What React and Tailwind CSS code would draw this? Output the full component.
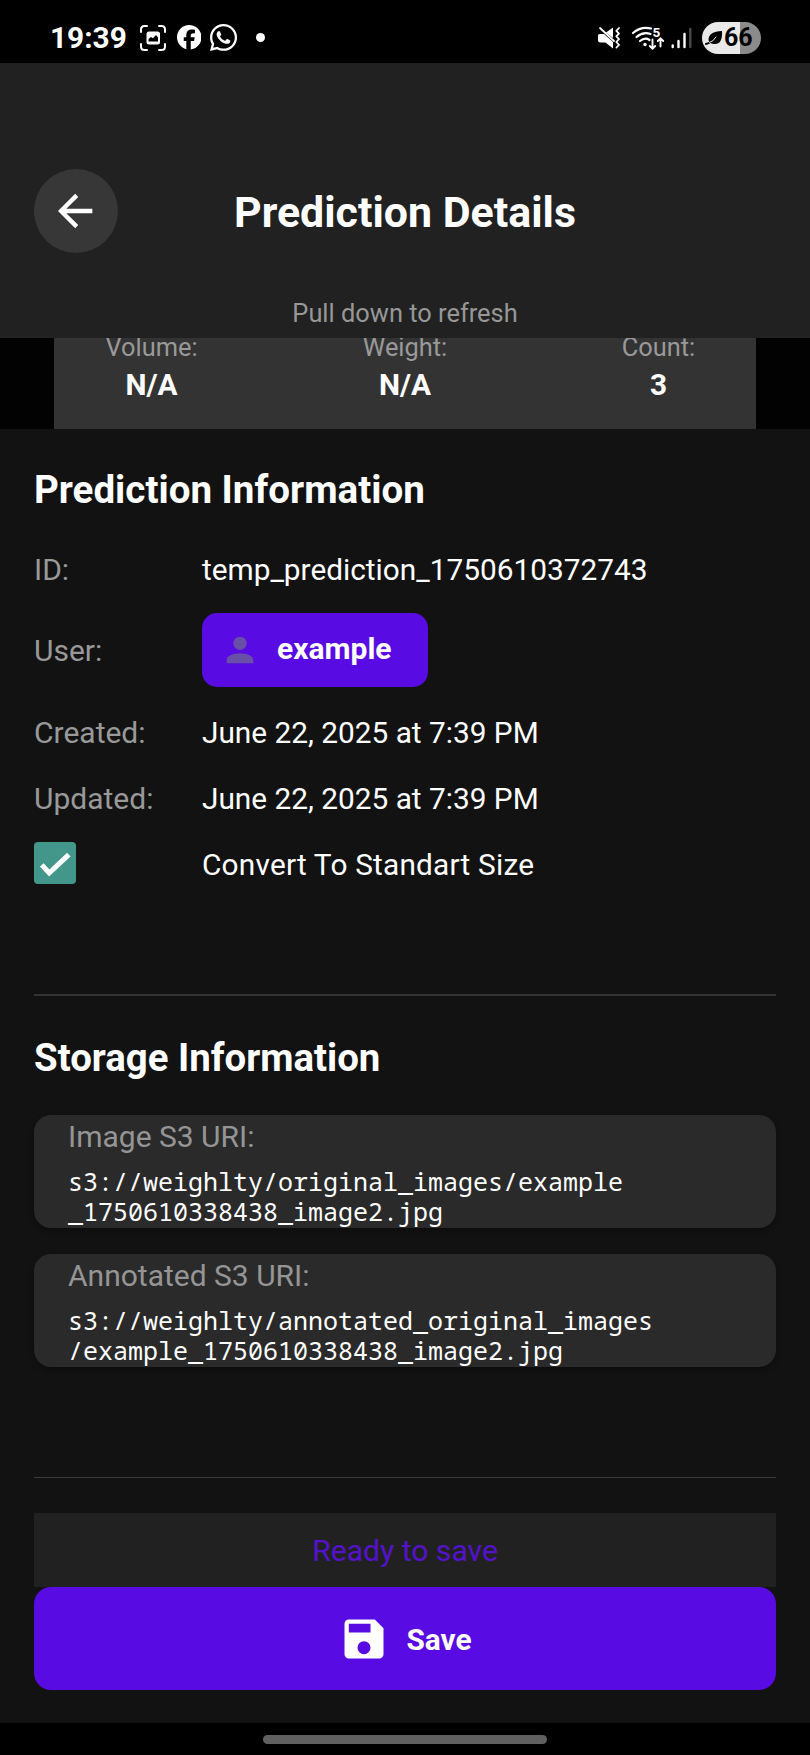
import { FaFacebook, FaWhatsapp } from "react-icons/fa6";

function CaptureIcon() {
  return (
    <svg className="h-[26px] w-[26px]" viewBox="0 0 26 26" fill="none">
      <path d="M1 7V4.5Q1 1 4.5 1H7M19 1h2.500Q25 1 25 4.500V7M25 19v2.500Q25 25 21.500 25H19M7 25H4.500Q1 25 1 21.500V19" stroke="#fff" strokeWidth="2" strokeLinecap="round" />
      <rect x="6.500" y="6.500" width="13.500" height="13" rx="2.500" fill="#fff" />
      <path d="M8.500 16.500v-2.500l2.500-2 2 1.300 3-3.300 2 2.500v4z" fill="#000" />
    </svg>
  );
}

function MuteIcon() {
  return (
    <svg className="h-[24px] w-[24px]" viewBox="0 0 24 24" fill="none">
      <path d="M1 9.500Q1 8 2.500 8H7L16 16V22.500L8.500 16.500H3.500Q1 16.500 1 14z" fill="#fff" />
      <path d="M9 6.500L16 1.500V12z" fill="#fff" />
      <path d="M3 2L17 15" stroke="#fff" strokeWidth="1.800" strokeLinecap="round" />
      <path d="M22 2L19.300 4.800L22 7.600L19.300 10.400L22 13.200L19.300 16L22 18.800L19.500 21.500" stroke="#fff" strokeWidth="1.800" strokeLinecap="round" strokeLinejoin="round" />
    </svg>
  );
}

function WifiIcon() {
  return (
    <svg className="h-[26px] w-[34px]" viewBox="0 0 34 26" fill="none" stroke="#fff" strokeLinecap="round">
      <path d="M2 8Q10 1 20 3.500" strokeWidth="2.200" />
      <path d="M5.500 12Q12 6.500 19.500 9" strokeWidth="2.200" />
      <path d="M9 16Q14 12 18.500 15" strokeWidth="2.200" />
      <circle cx="14" cy="19.500" r="1.700" fill="#fff" stroke="none" />
      <path d="M21.500 14.500V23.500M18.800 21L21.500 23.700L24.200 21" strokeWidth="1.900" />
      <path d="M29.500 21.500V13.500M26.800 16L29.500 13.300L32.200 16" strokeWidth="1.900" />
      <text x="21.600" y="11.700" fill="#fff" stroke="none" fontFamily="Roboto" fontWeight="700" fontSize="13.500">5</text>
    </svg>
  );
}

function SignalIcon() {
  return (
    <svg className="h-[24px] w-[22px]" viewBox="0 0 22 24" strokeWidth="2.400" strokeLinecap="round">
      <path d="M1.700 19.500V21M7.500 15V21M13.500 8V21" stroke="#fff" />
      <path d="M19.300 3V21" stroke="#4a4a4a" />
    </svg>
  );
}

function Battery() {
  return (
    <div className="ml-[9px] flex h-8 w-[59px] items-center rounded-full bg-[linear-gradient(90deg,#e9e9e9_38px,#8b8b8b_38px)] pl-[3px]">
      <svg className="h-[16px] w-[18px]" viewBox="0 0 18 16" fill="none">
        <path d="M17 1C17.500 10 15 14.500 9 14C6 13.800 4 12.500 3.500 10C3.500 4 8 1.500 17 1z" fill="#000" />
        <path d="M1 14Q7 12.500 10.500 7" stroke="#000" strokeWidth="2" strokeLinecap="round" />
        <path d="M4.500 12.500Q8.500 11.500 11 7" stroke="#e9e9e9" strokeWidth="1" strokeLinecap="round" />
      </svg>
      <span className="ml-px text-[25px] font-bold leading-8 text-black">66</span>
    </div>
  );
}

function StatusBar() {
  return (
    <div className="flex h-[63px] items-center bg-black pt-[12px] pr-[49px] pl-[50px]">
      <span className="w-[90px] text-[29.800px] leading-none font-bold text-white">19:39</span>
      <CaptureIcon />
      <FaFacebook className="ml-[10.500px] size-[24.500px] text-white" />
      <FaWhatsapp className="ml-[6.500px] size-[31px] text-white" />
      <span className="ml-[17px] size-[9.500px] rounded-full bg-white" />
      <div className="ml-auto flex items-center">
        <MuteIcon />
        <span className="w-[10px]" />
        <WifiIcon />
        <span className="w-[6px]" />
        <SignalIcon />
        <Battery />
      </div>
    </div>
  );
}

function Header() {
  return (
    <header className="h-[275px] bg-[#212121] pt-[105px]">
      <div className="grid h-[85px] grid-cols-[84px_1fr_84px] items-center px-[34px]">
        <button className="flex size-[84px] items-center justify-center rounded-full bg-[#373737] pr-[2px]">
          <svg className="size-[52px]" viewBox="0 0 24 24" fill="#fff">
            <path d="M20,11V13H8L13.500,18.500L12.080,19.920L4.160,12L12.080,4.080L13.500,5.500L8,11H20Z" />
          </svg>
        </button>
        <h1 className="pt-[3px] text-center text-[42.900px] leading-none font-bold text-white">Prediction Details</h1>
      </div>
      <p className="mt-[44px] text-center text-[25.400px] leading-[32px] text-[#979797]">Pull down to refresh</p>
    </header>
  );
}

function Stat({ label, value }) {
  return (
    <div className="flex w-[107px] flex-col items-center">
      <span className="text-[25.400px] leading-[32px] text-[#999]">{label}</span>
      <span className="mt-[4px] text-[29.800px] leading-[36px] font-bold text-white">{value}</span>
    </div>
  );
}

function Stats() {
  return (
    <div className="h-[91px] bg-[#020202] px-[54px]">
      <div className="h-full overflow-hidden bg-[#333]">
        <div className="-mt-[7px] flex justify-between px-[44px]">
          <Stat label="Volume:" value="N/A" />
          <Stat label="Weight:" value="N/A" />
          <Stat label="Count:" value="3" />
        </div>
      </div>
    </div>
  );
}

function InfoRow({ label, value }) {
  return (
    <div className="flex h-[66px] items-center leading-none">
      <div className="w-[168px] text-[30px] text-[#999]">{label}</div>
      <div className="text-[29.800px] text-white">{value}</div>
    </div>
  );
}

function Checkbox() {
  return (
    <span className="mb-[5px] flex size-[42px] items-center justify-center rounded-[4px] bg-[#43968a]">
      <svg className="size-[42px]" viewBox="0 0 42 42" fill="none">
        <path d="M7.800 22.800L15.200 31L34.800 12.600" stroke="#fff" strokeWidth="5" />
      </svg>
    </span>
  );
}

function UriCard({ label, lines }) {
  return (
    <div className="h-[113px] rounded-[17px] bg-[#2a2a2a] px-[34px] pt-[4px] shadow-[0_3px_6px_rgba(0,0,0,0.3)]">
      <div className="text-[30px] leading-[36px] text-[#959595]">{label}</div>
      <div className="mt-[11px] font-['Droid_Sans_Mono','Noto_Sans_Mono','DejaVu_Sans_Mono',monospace] text-[25px] leading-[30px] whitespace-nowrap text-white">
        {lines.map((line) => (
          <div key={line}>{line}</div>
        ))}
      </div>
    </div>
  );
}

export default function App() {
  return (
    <div className="flex h-[1755px] w-[810px] flex-col overflow-hidden bg-[#121212] font-[Roboto,sans-serif]">
      <StatusBar />
      <Header />
      <Stats />
      <main className="flex-1 px-[34px]">
        <section className="h-[565px]">
          <h2 className="pt-[37px] text-[38.550px] leading-[48px] font-bold text-white">Prediction Information</h2>
          <div className="mt-[23px]">
            <InfoRow label="ID:" value="temp_prediction_1750610372743" />
          </div>
          <div className="mt-[10px] flex h-[74px] items-center text-[30px] leading-none">
            <div className="w-[168px] pt-[2px] text-[#999]">User:</div>
            <button className="flex h-[74px] w-[226px] items-center rounded-[15px] bg-[#580be3] pl-[18px] text-white">
              <svg className="size-[40px]" viewBox="0 0 24 24" fill="#694fa7">
                <path d="M12,4A4,4 0 0,1 16,8A4,4 0 0,1 12,12A4,4 0 0,1 8,8A4,4 0 0,1 12,4M12,14C16.420,14 20,15.790 20,18V20H4V18C4,15.790 7.580,14 12,14Z" />
              </svg>
              <span className="ml-[17px] pb-[3px] font-bold">example</span>
            </button>
          </div>
          <div className="mt-[13px]">
            <InfoRow label="Created:" value="June 22, 2025 at 7:39 PM" />
            <InfoRow label="Updated:" value="June 22, 2025 at 7:39 PM" />
            <InfoRow label={<Checkbox />} value={<span className="tracking-[0.200px]">Convert To Standart Size</span>} />
          </div>
        </section>
        <hr className="h-[2px] border-0 bg-[#333]" />
        <section className="h-[480.500px]">
          <h2 className="pt-[38px] text-[38.400px] leading-[48px] font-bold text-white">Storage Information</h2>
          <div className="mt-[33px] flex flex-col gap-[26px]">
            <UriCard label="Image S3 URI:" lines={["s3://weighlty/original_images/example", "_1750610338438_image2.jpg"]} />
            <UriCard label="Annotated S3 URI:" lines={["s3://weighlty/annotated_original_images", "/example_1750610338438_image2.jpg"]} />
          </div>
        </section>
        <hr className="h-[1.500px] border-0 bg-[#3a3a3a]" />
        <div className="mt-[35px] h-[74px] bg-[#212121] pt-[20px] text-center text-[30.100px] leading-[36px] text-[#5512cc]">
          Ready to save
        </div>
        <button className="flex h-[103px] w-full items-center justify-center rounded-[17px] bg-[#580be3] text-white">
          <svg className="size-[52px]" viewBox="0 0 24 24" fill="#fff">
            <path d="M15,9H5V5H15M12,19A3,3 0 0,1 9,16A3,3 0 0,1 12,13A3,3 0 0,1 15,16A3,3 0 0,1 12,19M17,3H5C3.890,3 3,3.900 3,5V19A2,2 0 0,0 5,21H19A2,2 0 0,0 21,19V7L17,3Z" />
          </svg>
          <span className="ml-[16px] pt-[2px] text-[29.800px] leading-none font-bold">Save</span>
        </button>
      </main>
      <footer className="flex h-[32px] justify-center bg-black pt-[12px]">
        <span className="h-[9px] w-[284px] rounded-full bg-[#606060]" />
      </footer>
    </div>
  );
}
